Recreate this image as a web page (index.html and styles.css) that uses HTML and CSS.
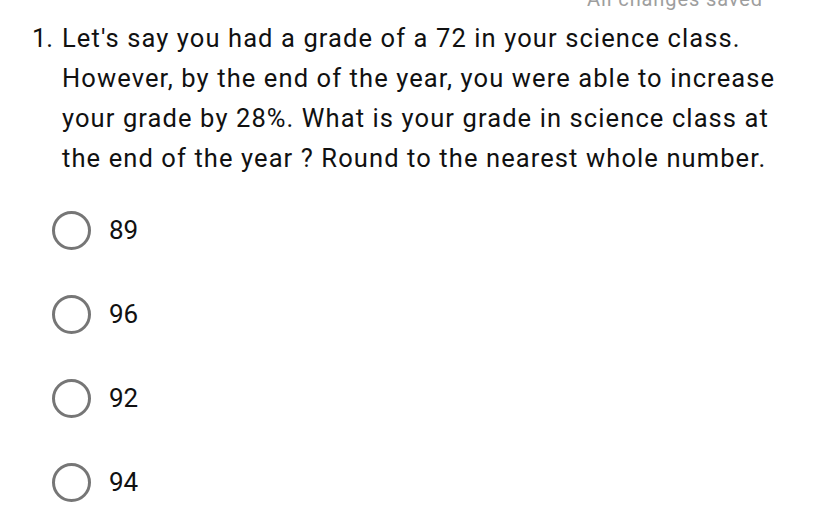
FILE: index.html
```html
<!DOCTYPE html>
<html lang="en">
<head>
<meta charset="utf-8">
<link rel="stylesheet" href="styles.css">
</head>
<body>
<div class="page">
  <div class="status">All changes saved</div>
  <div class="question">
    <span class="num">1.</span>
    <p class="text">Let's say you had a grade of a 72 in your science class. However, by the end of the year, you were able to increase your grade by 28%. What is your grade in science class at the end of the year ? Round to the nearest whole number.</p>
  </div>
  <ul class="options">
    <li class="option"><span class="radio"></span><span class="label">89</span></li>
    <li class="option"><span class="radio"></span><span class="label">96</span></li>
    <li class="option"><span class="radio"></span><span class="label">92</span></li>
    <li class="option"><span class="radio"></span><span class="label">94</span></li>
  </ul>
</div>
</body>
</html>
```

FILE: styles.css
```css
html, body {
  margin: 0;
  padding: 0;
  background: #ffffff;
}
body {
  width: 828px;
  height: 506px;
  overflow: hidden;
  font-family: Roboto, "Liberation Sans", sans-serif;
  color: #202124;
}
.page {
  display: flex;
  flex-direction: column;
}
.status {
  margin-top: -13px;
  height: 24px;
  line-height: 24px;
  font-size: 20px;
  letter-spacing: 0.9px;
  color: #9e9e9e;
  text-align: right;
  padding-right: 65px;
}
.question {
  display: flex;
  margin-top: 7px;
  padding-left: 32px;
  padding-right: 40px;
  font-size: 25.5px;
  line-height: 40px;
  letter-spacing: 1.1px;
  color: #111111;
}
.num {
  flex: none;
  width: 30px;
  letter-spacing: 0;
}
.text {
  margin: 0;
}
.options {
  list-style: none;
  margin: 10px 0 0 0;
  padding: 0 0 0 52px;
}
.option {
  display: flex;
  align-items: center;
  height: 84px;
}
.radio {
  flex: none;
  box-sizing: border-box;
  width: 39px;
  height: 39px;
  border: 3.5px solid #767676;
  border-radius: 50%;
}
.label {
  margin-left: 18px;
  font-size: 26px;
  color: #111111;
}
```
